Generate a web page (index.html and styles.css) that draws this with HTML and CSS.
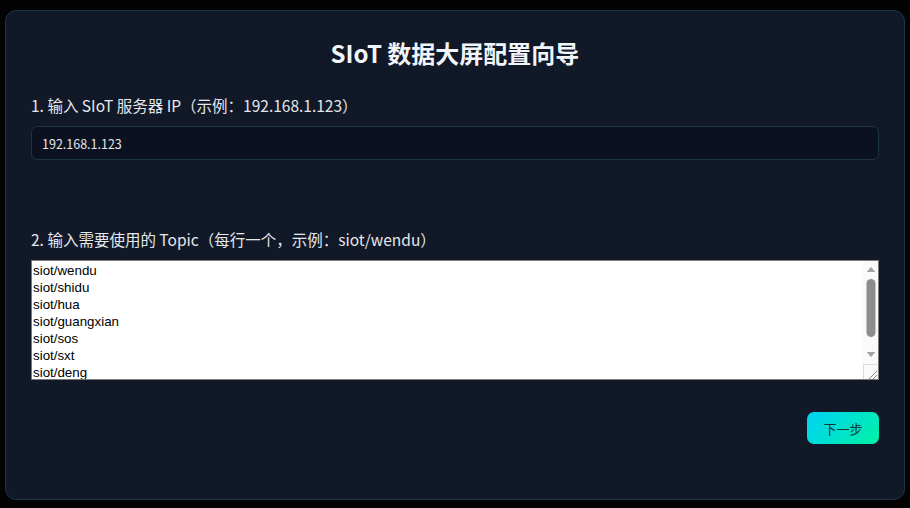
FILE: index.html
```html
<!DOCTYPE html>
<html lang="zh-CN">
<head>
<meta charset="utf-8">
<title>SIoT 数据大屏配置向导</title>
<link rel="stylesheet" href="styles.css">
</head>
<body>
<div class="card">
  <h1 class="title">SIoT 数据大屏配置向导</h1>
  <div class="group group-ip">
    <label class="label" for="ip">1. 输入 SIoT 服务器 IP（示例：192.168.1.123）</label>
    <input class="ip-input" id="ip" type="text" value="192.168.1.123">
  </div>
  <div class="group">
    <label class="label" for="topics">2. 输入需要使用的 Topic（每行一个，示例：siot/wendu）</label>
    <div class="textarea-wrap">
      <textarea class="topics" id="topics">siot/wendu
siot/shidu
siot/hua
siot/guangxian
siot/sos
siot/sxt
siot/deng
siot/fengshan
siot/duoji</textarea>
      <svg class="scrollbar" width="15" height="118" viewBox="0 0 15 118" aria-hidden="true">
        <rect x="0" y="0" width="15" height="118" fill="#fafafa"/>
        <polygon points="3.6,11 12.4,11 8,6" fill="#a3a3a3"/>
        <rect x="3.5" y="18" width="9" height="58" rx="4.5" fill="#8d8d8d"/>
        <polygon points="3.6,91 12.4,91 8,96" fill="#a3a3a3"/>
        <line x1="0.5" y1="103.5" x2="15" y2="103.5" stroke="#dcdcdc" stroke-width="1"/>
        <line x1="0.5" y1="103.5" x2="0.5" y2="118" stroke="#dcdcdc" stroke-width="1"/>
        <line x1="14" y1="110" x2="6" y2="118" stroke="#8a8a8a" stroke-width="1"/>
        <line x1="14" y1="114" x2="10" y2="118" stroke="#8a8a8a" stroke-width="1"/>
      </svg>
    </div>
  </div>
  <div class="actions">
    <button class="next-btn" type="button">下一步</button>
  </div>
</div>
</body>
</html>
```

FILE: styles.css
```css
* { box-sizing: border-box; }

html, body {
  margin: 0;
  background: #030303;
}

body {
  padding: 10px 5px 8px 5px;
  font-family: "Noto Sans CJK SC", "Noto Sans", sans-serif;
}

.card {
  width: 900px;
  height: 490px;
  background: #111827;
  border: 1px solid #1c3445;
  border-radius: 11px;
  padding: 26px 25px 0 25px;
}

.title {
  margin: 0;
  text-align: center;
  font-size: 24px;
  line-height: 32px;
  font-weight: 700;
  color: #f1f5f9;
}

.group {
  display: flex;
  flex-direction: column;
}

.group-ip {
  margin-top: 25px;
  margin-bottom: 68px;
}

.label {
  font-size: 15.5px;
  line-height: 22px;
  color: #e5e7eb;
  margin-bottom: 10px;
}

.ip-input {
  height: 34px;
  width: 100%;
  background: #0b1120;
  border: 1px solid #1c3445;
  border-radius: 6px;
  padding: 0 10px;
  font-family: "Noto Sans CJK SC", "Noto Sans", sans-serif;
  font-size: 12.5px;
  color: #e5e7eb;
  outline: none;
}

.textarea-wrap {
  position: relative;
}

.topics {
  width: 100%;
  height: 120px;
  background: #ffffff;
  border: 1px solid #7a7a7a;
  border-radius: 0;
  padding: 1px 16px 0 1px;
  margin: 0;
  font-family: "Liberation Sans", Arial, sans-serif;
  font-size: 13.33px;
  line-height: 17px;
  color: #000;
  resize: both;
  display: block;
}

.scrollbar {
  position: absolute;
  top: 1px;
  right: 1px;
  display: block;
  pointer-events: none;
}

.actions {
  display: flex;
  justify-content: flex-end;
  margin-top: 32px;
}

.next-btn {
  width: 72px;
  height: 32px;
  border: none;
  border-radius: 7px;
  background: linear-gradient(135deg, #00d2f5 0%, #00f2a6 100%);
  color: #0e3a3a;
  font-family: "Noto Sans CJK SC", sans-serif;
  font-size: 13px;
  cursor: pointer;
}
```
